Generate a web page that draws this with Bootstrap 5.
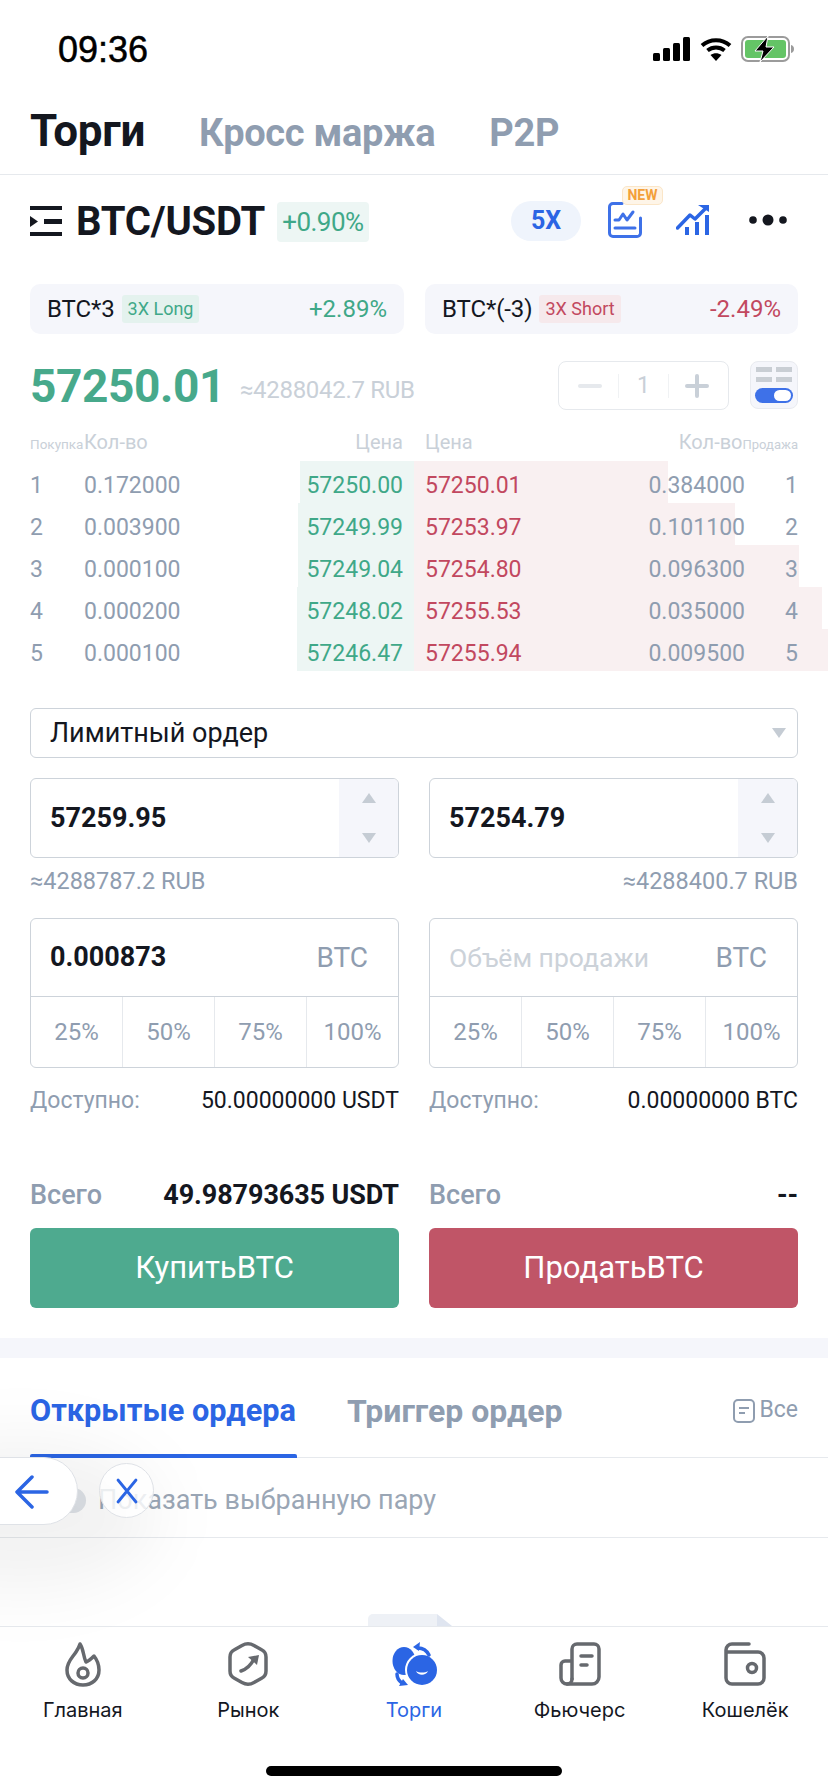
<!doctype html>
<html lang="ru">
<head>
  <meta charset="utf-8">
  <meta name="viewport" content="width=device-width, initial-scale=1">
  <title>Торги</title>
  <link href="https://cdn.jsdelivr.net/npm/bootstrap@5.3.7/dist/css/bootstrap.min.css" rel="stylesheet">
  <style>
    :root {
      --ink: #14171f;
      --gray: #8f9db0;
      --pale: #c9d0d8;
      --up: #3fa888;
      --down: #c2485f;
      --blue: #2b65e4;
      --soft: #f5f6fb;
      --line: #e6e9ed;
      --edge: #cdd3da;
    }
    body {
      background: #fff;
      font-family: Roboto, sans-serif;
      color: var(--ink);
    }
    .phone { width: 828px; height: 1792px; overflow: hidden; position: relative; background: #fff; }
    .pad { padding-left: 30px; padding-right: 30px; }
    .split { display: grid; grid-template-columns: 369px 369px; column-gap: 30px; }

    .status-bar { height: 100px; padding: 33px 33px 0 58px; }
    .clock { font-family: "Liberation Sans", sans-serif; font-size: 36px; line-height: 34px; -webkit-text-stroke: .5px #000; color: #000; }

    .top-tabs { height: 75px; gap: 54px; border-bottom: 1px solid var(--line); padding-top: 9px; align-items: baseline; }
    .top-tab { font-size: 38px; line-height: 44px; font-weight: 700; color: #8f9db0; letter-spacing: -.3px; }
    .top-tab.on { color: var(--ink); font-size: 44px; }

    .pair-bar { height: 93px; padding-top: 27px; }
    .pair-name { font-size: 40px; line-height: 42px; font-weight: 700; margin-left: 14px; letter-spacing: -.2px; }
    .pair-chg { margin-left: 12px; background: #edf6f4; color: var(--up); font-size: 26px; line-height: 40px; padding: 0 5px; border-radius: 4px; letter-spacing: -.5px; }
    .lev { width: 70px; height: 40px; border-radius: 20px; background: #eff4fc; color: var(--blue); font-weight: 700; font-size: 25px; line-height: 40px; text-align: center; }
    .new-tag { position: absolute; left: 14px; top: -16px; width: 41px; height: 19px; background: #fef5e8; border: 1px solid #fbe6c8; border-radius: 5px; color: #f3a03b; font-size: 14px; line-height: 17px; font-weight: 700; text-align: center; }

    .etf-tiles { display: grid; grid-template-columns: 374px 373px; column-gap: 21px; }
    .etf { height: 50px; background: var(--soft); border-radius: 10px; padding: 0 17px 0 17px; }
    .etf-name { font-size: 24px; letter-spacing: -.1px; }
    .etf-tag { font-size: 18px; line-height: 28px; padding: 0 6px; border-radius: 3px; margin-left: 7px; }
    .etf-tag.long { background: #e4f2ee; color: var(--up); }
    .etf-tag.short { background: #f6e9ec; color: var(--down); }
    .etf-chg { font-size: 24px; }

    .ticker { height: 93px; padding-top: 27px; }
    .last-price { font-size: 46px; line-height: 50px; font-weight: 700; color: #47a98b; letter-spacing: -.4px; }
    .last-rub { font-size: 24px; color: var(--pale); margin-left: 15px; line-height: 30px; margin-top: 14px; letter-spacing: -.3px; }
    .stepper { width: 171px; height: 49px; border: 1px solid var(--line); border-radius: 8px; }
    .step-n { width: 51px; height: 24px; border-left: 1px solid #f0f2f4; border-right: 1px solid #f0f2f4; color: var(--pale); font-size: 23px; line-height: 24px; text-align: center; }
    .layout-btn { width: 48px; height: 48px; margin-left: 21px; background: var(--soft); border: 1px solid #e9ebf0; border-radius: 8px; }

    .book-head { height: 38px; padding-top: 3px; color: var(--pale); font-size: 20px; line-height: 24px; }
    .book-side { font-size: 13.5px; }
    .side-l { padding-left: 30px; padding-right: 11px; }
    .side-r { padding-left: 11px; padding-right: 30px; }
    .side-r .book-side { font-size: 13px; white-space: nowrap; }
    .book-row { height: 42px; font-size: 23px; line-height: 42px; color: var(--gray); }
    .half { position: relative; }
    .depth { position: absolute; top: -4px; bottom: 4px; }
    .depth.bid { right: 0; background: #edf6f4; }
    .depth.ask { left: 0; background: #f9f0f1; }
    .cell { position: relative; }
    .num-l { width: 54px; }
    .num-r { width: 53px; text-align: right; }
    .px-up { color: var(--up); }
    .px-down { color: var(--down); }

    .order-kind { height: 50px; margin-top: 33px; border: 1px solid var(--edge); border-radius: 6px; padding: 0 11px 0 19px; font-size: 27px; }
    .caret-d { width: 0; height: 0; border-left: 7px solid transparent; border-right: 7px solid transparent; border-top: 10px solid #c5ccd4; }
    .caret-u { width: 0; height: 0; border-left: 7px solid transparent; border-right: 7px solid transparent; border-bottom: 10px solid #c5ccd4; }

    .field { height: 80px; border: 1px solid var(--edge); border-radius: 6px; overflow: hidden; }
    .field-val { padding-left: 19px; font-size: 27px; font-weight: 700; }
    .spin { width: 59px; background: var(--soft); padding: 14px 0; }
    .rub { font-size: 23.5px; line-height: 24px; color: var(--gray); margin-top: 11px; }

    .amount { height: 150px; margin-top: 25px; border: 1px solid var(--edge); border-radius: 6px; overflow: hidden; }
    .amount-top { height: 78px; border-bottom: 1px solid var(--edge); padding: 0 30px 0 19px; font-size: 27px; }
    .amount-top .ccy { color: var(--gray); font-weight: 400; font-size: 28px; }
    .amount-top .ph { color: #ccd2d9; font-weight: 400; font-size: 26.5px; }
    .pct { flex: 1 1 0; font-size: 24px; color: var(--gray); border-left: 1px solid var(--line); }
    .pct:first-child { border-left: 0; }

    .avail { font-size: 23px; line-height: 26px; margin-top: 20px; color: var(--gray); }
    .avail b { font-weight: 400; color: var(--ink); }
    .total { font-size: 27px; line-height: 30px; margin-top: 66px; font-weight: 500; color: var(--gray); }
    .total b { font-weight: 700; color: var(--ink); font-size: 27px; letter-spacing: -.1px; }

    .trade-btn { height: 80px; margin-top: 18px; border: 0; border-radius: 6px; color: #fff; font-size: 31px; }
    .trade-btn.buy, .trade-btn.buy:hover { background: #4eaa8f; color: #fff; }
    .trade-btn.sell, .trade-btn.sell:hover { background: #c05567; color: #fff; }

    .band { height: 20px; margin-top: 30px; background: var(--soft); }

    .order-tabs { height: 100px; border-bottom: 1px solid var(--line); padding-right: 30px; padding-top: 6px; }
    .otab { font-size: 32px; line-height: 36px; font-weight: 700; color: var(--gray); }
    .otab.on { color: var(--blue); font-size: 30.7px; }
    .otab-line { position: absolute; left: 0; right: -1px; bottom: -29px; height: 4px; background: var(--blue); border-radius: 2px 2px 0 0; }
    .all-link { font-size: 23px; color: var(--gray); }

    .pair-filter { height: 80px; border-bottom: 1px solid var(--line); padding-left: 98px; padding-top: 6px; font-size: 27px; color: #9aa6b5; }
    .ghost-switch { position: absolute; left: 46px; top: 30px; width: 40px; height: 25px; border-radius: 13px; background: #dfe3e8; }

    .empty-art { height: 88px; }
    .doc-top { position: absolute; left: 368px; bottom: 0; width: 84px; height: 12px; background: #eef1f6; border-radius: 5px 0 0 0; }
    .doc-fold { position: absolute; right: 0; top: 0; width: 15px; height: 12px; background: #dfe5f0; }
    .doc-cut { position: absolute; right: 0; top: 0; width: 0; height: 0; border-right: 15px solid #fff; border-bottom: 12px solid transparent; }

    .tab-bar { border-top: 1px solid var(--line); background: #fff; height: 142px; padding-top: 14px; position: relative; }
    .tab-item { flex: 1 1 0; font-family: Inter, sans-serif; font-size: 20px; line-height: 24px; color: var(--ink); }
    .tab-item.on { color: var(--blue); }
    .tab-ico { height: 46px; margin-bottom: 11px; }
    .home-bar { position: absolute; left: 266px; top: 1766px; width: 296px; height: 10px; border-radius: 5px; background: #000; }

    .back-glow { position: absolute; left: -120px; top: 1440px; width: 280px; height: 150px; border-radius: 50%; background: rgba(0,0,0,.05); filter: blur(32px); }
    .back-pill { position: absolute; left: -34px; top: 1457px; width: 112px; height: 68px; background: #fff; border: 1px solid #dfe2e7; border-radius: 34px; }
    .close-ball { position: absolute; left: 99px; top: 1463px; width: 55px; height: 55px; background: rgba(255,255,255,.82); border: 1px solid #dfe2e7; border-radius: 50%; }
  </style>
</head>
<body>
<div class="phone">

  <!-- status bar -->
  <div class="status-bar d-flex justify-content-between align-items-start">
    <div class="clock">09:36</div>
    <div class="d-flex align-items-center" style="gap:9px;margin-top:3px">
      <svg width="38" height="24" viewBox="0 0 38 24"><rect x="0" y="16" width="7" height="8" rx="1.5"/><rect x="10" y="11" width="7" height="13" rx="1.5"/><rect x="20" y="6" width="7" height="18" rx="1.5"/><rect x="30" y="0" width="7" height="24" rx="1.5"/></svg>
      <svg width="32" height="24" viewBox="0 0 32 24"><path d="M2 8.500C10 1.500 22 1.500 30 8.500" fill="none" stroke="#000" stroke-width="4"/><path d="M7.500 13.500C12.500 9.500 19.500 9.500 24.500 13.500" fill="none" stroke="#000" stroke-width="4"/><path d="M16 24l-5.500-6c3.500-2.500 7.500-2.500 11 0z"/></svg>
      <svg width="54" height="26" viewBox="0 0 54 26"><rect x="1" y="1" width="47" height="24" rx="6" fill="none" stroke="#9b9b9b" stroke-width="2"/><rect x="4" y="4" width="41" height="18" rx="3" fill="#64c466"/><path d="M50 9c2 .5 3 2 3 4s-1 3.500-3 4z" fill="#9b9b9b"/><path d="M27 0L14 15h8l-3 11 14-15h-8z" stroke="#fff" stroke-width="1"/></svg>
    </div>
  </div>

  <!-- tabs -->
  <div class="top-tabs d-flex pad">
    <div class="top-tab on">Торги</div>
    <div class="top-tab">Кросс маржа</div>
    <div class="top-tab">P2P</div>
  </div>

  <!-- pair -->
  <div class="pair-bar d-flex align-items-start pad">
    <svg width="32" height="30" viewBox="0 0 32 30" class="mt-1" fill="#14171f"><rect width="32" height="4"/><rect x="14" y="13" width="18" height="5"/><rect y="26" width="32" height="4"/><path d="M0 10l8 5.500-8 5.500z"/></svg>
    <div class="pair-name" style="margin-top:-1px">BTC/USDT</div>
    <div class="pair-chg">+0.90%</div>
    <div class="ms-auto d-flex align-items-start" style="margin-right:11px">
      <div class="lev" style="margin-top:-1px">5X</div>
      <div class="position-relative" style="margin-left:27px">
        <svg width="34" height="36" viewBox="0 0 34 36" fill="none" stroke="#3e71e8" stroke-width="3" stroke-linecap="round" stroke-linejoin="round"><path d="M14 1.500H5a3.500 3.500 0 0 0-3.500 3.500v26A3.500 3.500 0 0 0 5 34.500h24a3.500 3.500 0 0 0 3.500-3.500V16"/><path d="M7 18h4l4-6 4 6 6-8"/><path d="M7 26h20"/></svg>
        <div class="new-tag">NEW</div>
      </div>
      <svg width="34" height="32" viewBox="0 0 34 32" fill="none" stroke="#2b65e4" stroke-width="3.500" style="margin-left:34px;margin-top:3px"><path d="M1.500 23L14 10l5 4L30 3" stroke-linecap="round" stroke-linejoin="round"/><path d="M22 0h11v7z" fill="#2b65e4" stroke="none"/><path d="M11 22v8M21 17v13M31 10v20" stroke-width="4"/></svg>
      <svg width="38" height="12" viewBox="0 0 38 12" fill="#14171f" style="margin-left:39px;margin-top:12px"><circle cx="4" cy="6" r="3.800"/><circle cx="19" cy="6" r="5.500"/><circle cx="34" cy="6" r="3.800"/></svg>
    </div>
  </div>

  <!-- leveraged tokens -->
  <div class="etf-tiles pad" style="margin-top:16px">
    <div class="etf d-flex align-items-center">
      <span class="etf-name">BTC*3</span><span class="etf-tag long">3X Long</span>
      <span class="etf-chg px-up ms-auto">+2.89%</span>
    </div>
    <div class="etf d-flex align-items-center">
      <span class="etf-name">BTC*(-3)</span><span class="etf-tag short">3X Short</span>
      <span class="etf-chg px-down ms-auto">-2.49%</span>
    </div>
  </div>

  <!-- last price -->
  <div class="ticker d-flex align-items-start pad">
    <div class="last-price">57250.01</div>
    <div class="last-rub">≈4288042.7 RUB</div>
    <div class="ms-auto d-flex align-items-center justify-content-center stepper">
      <svg width="24" height="4" viewBox="0 0 24 4" class="me-3"><rect width="24" height="4" rx="2" fill="#e6e9ed"/></svg>
      <div class="step-n">1</div>
      <svg width="24" height="24" viewBox="0 0 24 24" class="ms-3"><rect y="10" width="24" height="4" rx="2" fill="#c9d0d8"/><rect x="10" width="4" height="24" rx="2" fill="#c9d0d8"/></svg>
    </div>
    <div class="layout-btn">
      <svg width="46" height="46" viewBox="0 0 46 46"><g fill="#c9ced4"><rect x="5" y="5" width="16" height="5"/><rect x="25" y="5" width="16" height="5"/><rect x="5" y="15" width="16" height="5"/><rect x="25" y="15" width="16" height="5"/></g><rect x="4" y="26" width="38" height="15" rx="7.500" fill="#3e71e8"/><rect x="23" y="28" width="17" height="11" rx="5.500" fill="#fff"/></svg>
    </div>
  </div>

  <!-- order book -->
  <div class="book-head split" style="grid-template-columns:414px 414px;column-gap:0">
    <div class="d-flex align-items-baseline side-l"><span class="book-side num-l">Покупка</span><span>Кол-во</span><span class="ms-auto">Цена</span></div>
    <div class="d-flex align-items-baseline side-r"><span>Цена</span><span class="ms-auto">Кол-во</span><span class="book-side">Продажа</span></div>
  </div>
  <div id="book"></div>

  <!-- order form -->
  <div class="pad">
    <div class="order-kind d-flex align-items-center justify-content-between">Лимитный ордер <span class="caret-d"></span></div>

    <div class="split" style="margin-top:20px">
      <div class="field d-flex">
        <div class="field-val flex-grow-1 d-flex align-items-center">57259.95</div>
        <div class="spin d-flex flex-column align-items-center justify-content-between"><span class="caret-u"></span><span class="caret-d"></span></div>
      </div>
      <div class="field d-flex">
        <div class="field-val flex-grow-1 d-flex align-items-center">57254.79</div>
        <div class="spin d-flex flex-column align-items-center justify-content-between"><span class="caret-u"></span><span class="caret-d"></span></div>
      </div>
    </div>
    <div class="split">
      <div class="rub">≈4288787.2 RUB</div>
      <div class="rub text-end">≈4288400.7 RUB</div>
    </div>

    <div class="split">
      <div class="amount">
        <div class="amount-top d-flex align-items-center justify-content-between"><b>0.000873</b><span class="ccy">BTC</span></div>
        <div class="d-flex" style="height:70px">
          <div class="pct d-flex align-items-center justify-content-center">25%</div>
          <div class="pct d-flex align-items-center justify-content-center">50%</div>
          <div class="pct d-flex align-items-center justify-content-center">75%</div>
          <div class="pct d-flex align-items-center justify-content-center">100%</div>
        </div>
      </div>
      <div class="amount">
        <div class="amount-top d-flex align-items-center justify-content-between"><span class="ph">Объём продажи</span><span class="ccy">BTC</span></div>
        <div class="d-flex" style="height:70px">
          <div class="pct d-flex align-items-center justify-content-center">25%</div>
          <div class="pct d-flex align-items-center justify-content-center">50%</div>
          <div class="pct d-flex align-items-center justify-content-center">75%</div>
          <div class="pct d-flex align-items-center justify-content-center">100%</div>
        </div>
      </div>
    </div>

    <div class="split">
      <div class="avail d-flex justify-content-between"><span>Доступно:</span><b>50.00000000 USDT</b></div>
      <div class="avail d-flex justify-content-between"><span>Доступно:</span><b>0.00000000 BTC</b></div>
    </div>

    <div class="split">
      <div class="total d-flex justify-content-between"><span>Всего</span><b>49.98793635 USDT</b></div>
      <div class="total d-flex justify-content-between"><span>Всего</span><b>--</b></div>
    </div>

    <div class="split">
      <button class="btn trade-btn buy">КупитьBTC</button>
      <button class="btn trade-btn sell">ПродатьBTC</button>
    </div>
  </div>

  <div class="band"></div>

  <!-- open orders -->
  <div class="order-tabs d-flex align-items-center" style="padding-left:30px">
    <div class="otab on position-relative">Открытые ордера<div class="otab-line"></div></div>
    <div class="otab" style="margin-left:51px">Триггер ордер</div>
    <div class="ms-auto all-link d-flex align-items-center gap-1">
      <svg width="22" height="24" viewBox="0 0 22 24" fill="none" stroke="#8f9db0" stroke-width="2"><rect x="1" y="1" width="20" height="22" rx="4"/><path d="M6 9h10M6 14h6"/></svg>Все
    </div>
  </div>
  <div class="pair-filter d-flex align-items-center position-relative">
    <div class="ghost-switch"></div>
    <span class="position-relative">Показать выбранную пару</span>
  </div>
  <div class="empty-art position-relative">
    <div class="doc-top"><div class="doc-fold"></div><div class="doc-cut"></div></div>
  </div>

  <!-- bottom tabs -->
  <div class="tab-bar d-flex">
    <div class="tab-item d-flex flex-column align-items-center">
      <div class="tab-ico">
        <svg width="36" height="46" viewBox="0 0 36 46" fill="none" stroke="#66696e" stroke-width="3.500" stroke-linecap="round" stroke-linejoin="round"><path d="M15 3C19 9 18 15 21 21 24 20 27 17 29 15 33 20 34 25 34 29 34 38 27 44 18 44 9 44 2 38 2 29 2 21 7 17 11 11 13 8 14 6 15 3z"/><circle cx="18" cy="32" r="5"/></svg>
      </div>
      Главная
    </div>
    <div class="tab-item d-flex flex-column align-items-center">
      <div class="tab-ico">
        <svg width="40" height="46" viewBox="0 0 40 46" fill="none" stroke="#66696e" stroke-width="3.500" stroke-linecap="round" stroke-linejoin="round"><path d="M14 4.500Q20 1 26 4.500L34 9Q38 11 38 16V30Q38 35 34 37L26 41.500Q20 45 14 41.500L6 37Q2 35 2 30V16Q2 11 6 9z"/><path d="M13 30c6-2 10-6 13-12"/><path d="M20 16l11-2-2 10z" fill="#66696e" stroke="none"/></svg>
      </div>
      Рынок
    </div>
    <div class="tab-item on d-flex flex-column align-items-center">
      <div class="tab-ico">
        <svg width="46" height="46" viewBox="0 0 46 46" fill="#2b65e4"><ellipse cx="13" cy="20" rx="11.500" ry="14"/><circle cx="31" cy="29" r="17" fill="#fff"/><circle cx="31" cy="29" r="15"/><path d="M25 30c2 5 10 5 12 0-3 2-9 2-12 0z" fill="#fff"/><path d="M27 7c5 0 9 3 11 7" fill="none" stroke="#2b65e4" stroke-width="3.500" stroke-linecap="round"/><path d="M22 6l7-5-1 9z"/><path d="M6 33c0 4 2 7 5 9" fill="none" stroke="#2b65e4" stroke-width="3.500" stroke-linecap="round"/><path d="M8 45l9-1-5-6z"/></svg>
      </div>
      Торги
    </div>
    <div class="tab-item d-flex flex-column align-items-center">
      <div class="tab-ico">
        <svg width="44" height="46" viewBox="0 0 44 46" fill="none" stroke="#66696e" stroke-width="3.500" stroke-linecap="round" stroke-linejoin="round"><path d="M14 38V8a5 5 0 0 1 5-5h17a5 5 0 0 1 5 5v28a7 7 0 0 1-7 7H9a6 6 0 0 1-6-6V24a4 4 0 0 1 4-4h7"/><path d="M9 43a5 5 0 0 0 5-5"/><path d="M23 15h11M23 24h6"/></svg>
      </div>
      Фьючерс
    </div>
    <div class="tab-item d-flex flex-column align-items-center">
      <div class="tab-ico">
        <svg width="42" height="46" viewBox="0 0 42 46" fill="none" stroke="#66696e" stroke-width="3.500" stroke-linecap="round" stroke-linejoin="round"><path d="M25 3H8a6 6 0 0 0-6 6v28a6 6 0 0 0 6 6h26a6 6 0 0 0 6-6V17a6 6 0 0 0-6-6H2"/><circle cx="28" cy="27" r="4.500"/></svg>
      </div>
      Кошелёк
    </div>
  </div>

  <!-- floating back control -->
  <div class="back-glow"></div>
  <div class="back-pill"></div>
  <svg class="position-absolute" style="left:15px;top:1474px" width="34" height="36" viewBox="0 0 34 36" fill="none" stroke="#2b65e4" stroke-width="3.500" stroke-linecap="round" stroke-linejoin="round"><path d="M32 18H3M17 3L2 18l15 15"/></svg>
  <div class="close-ball d-flex align-items-center justify-content-center">
    <svg width="22" height="26" viewBox="0 0 22 26" fill="none" stroke="#2b65e4" stroke-width="2.800" stroke-linecap="round"><path d="M2 2l18 22M20 2L2 24"/></svg>
  </div>
  <div class="home-bar"></div>
</div>

<script>
  // order book rows, widths are the depth bars in px
  const rows = [
    ["0.172000", "57250.00", 114, "57250.01", "0.384000", 254],
    ["0.003900", "57249.99", 116, "57253.97", "0.101100", 321],
    ["0.000100", "57249.04", 116, "57254.80", "0.096300", 385],
    ["0.000200", "57248.02", 117, "57255.53", "0.035000", 408],
    ["0.000100", "57246.47", 117, "57255.94", "0.009500", 414],
  ];
  document.getElementById("book").innerHTML = rows.map((r, i) => `
    <div class="book-row split" style="grid-template-columns:414px 414px;column-gap:0">
      <div class="half side-l d-flex">
        <div class="depth bid" style="width:${r[2]}px"></div>
        <span class="cell num-l">${i + 1}</span><span class="cell">${r[0]}</span>
        <span class="cell px-up ms-auto">${r[1]}</span>
      </div>
      <div class="half side-r d-flex">
        <div class="depth ask" style="width:${r[5]}px"></div>
        <span class="cell px-down">${r[3]}</span>
        <span class="cell ms-auto">${r[4]}</span><span class="cell num-r">${i + 1}</span>
      </div>
    </div>`).join("");
</script>
</body>
</html>
